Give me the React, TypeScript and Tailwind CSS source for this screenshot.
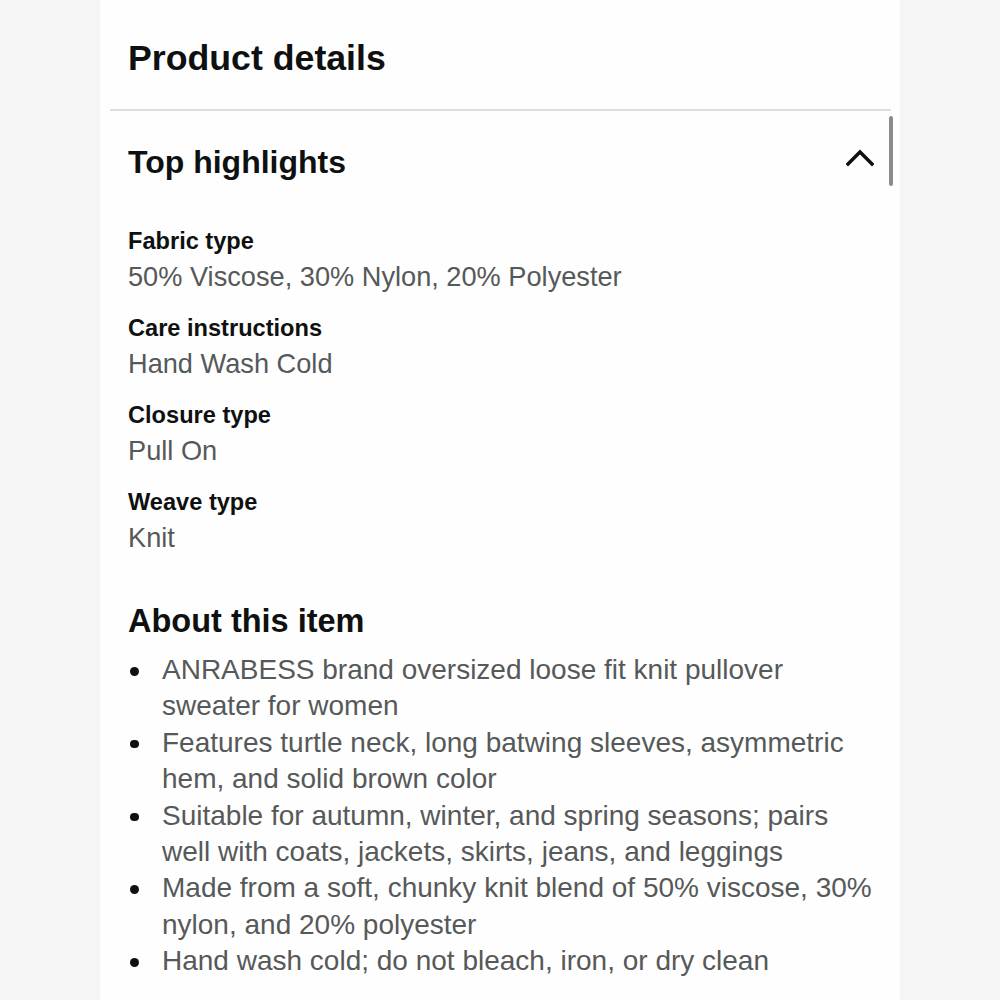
import React from "react";

const highlights = [
  { label: "Fabric type", value: "50% Viscose, 30% Nylon, 20% Polyester" },
  { label: "Care instructions", value: "Hand Wash Cold" },
  { label: "Closure type", value: "Pull On" },
  { label: "Weave type", value: "Knit" },
];

// lines are kept as in the screenshot so the wrapping matches
const bullets: string[][] = [
  ["ANRABESS brand oversized loose fit knit pullover", "sweater for women"],
  ["Features turtle neck, long batwing sleeves, asymmetric", "hem, and solid brown color"],
  ["Suitable for autumn, winter, and spring seasons; pairs", "well with coats, jackets, skirts, jeans, and leggings"],
  ["Made from a soft, chunky knit blend of 50% viscose, 30%", "nylon, and 20% polyester"],
  ["Hand wash cold; do not bleach, iron, or dry clean"],
];

const ChevronUp = () => (
  <svg width="28" height="20" viewBox="0 0 28 20" className="mt-[3px] shrink-0">
    <polyline
      points="2,17 14,5 26,17"
      fill="none"
      stroke="#0f1111"
      strokeWidth="3.4"
      strokeLinecap="square"
      strokeLinejoin="miter"
    />
  </svg>
);

export default function App() {
  return (
    <div className="min-h-screen bg-[#f5f5f5] flex justify-center font-['Liberation_Sans',Arial,sans-serif]">
      <div className="relative w-[800px] h-[1000px] overflow-hidden bg-[#fefefe]">
        <div className="h-[109px] pl-[28px] pt-[38px]">
          <h1 className="text-[35.7px] leading-[40px] font-bold text-[#0f1111]">
            Product details
          </h1>
        </div>
        <div className="ml-[10px] mr-[9px] h-[2px] bg-[#dedede]" />

        <div className="mt-[33px] pl-[28px] pr-[26px] flex justify-between items-start">
          <h2 className="text-[32px] leading-[36px] font-bold text-[#0f1111]">
            Top highlights
          </h2>
          <ChevronUp />
        </div>

        <div className="mt-[46px] pl-[28px] flex flex-col gap-[18px]">
          {highlights.map((h) => (
            <div key={h.label}>
              <div className="text-[23.6px] leading-[30px] font-bold text-[#0f1111]">
                {h.label}
              </div>
              <div className="mt-[3px] text-[27.2px] leading-[36px] text-[#565959]">
                {h.value}
              </div>
            </div>
          ))}
        </div>

        <h2 className="mt-[46px] pl-[28px] text-[32.5px] leading-[38px] font-bold text-[#0f1111]">
          About this item
        </h2>
        <ul className="mt-[12px] pl-[28px]">
          {bullets.map((lines, i) => (
            <li key={i} className="flex">
              <span className="w-[34px] shrink-0 pt-[15px] pl-[2px]">
                <span className="block w-[8.5px] h-[8.5px] rounded-full bg-[#0f1111]" />
              </span>
              <span className="text-[28px] leading-[36.4px] text-[#565959] whitespace-nowrap">
                {lines.map((l, j) => (
                  <span key={j} className="block">
                    {l}
                  </span>
                ))}
              </span>
            </li>
          ))}
        </ul>

        <div className="absolute top-[116px] right-[7px] w-[4px] h-[70px] rounded-full bg-[#8c8c8c]" />
      </div>
    </div>
  );
}
